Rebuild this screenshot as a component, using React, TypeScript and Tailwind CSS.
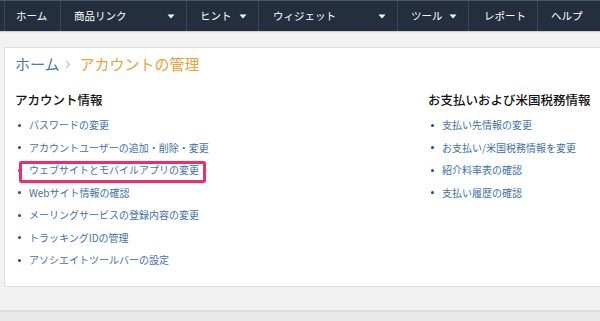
import React from "react";

const Caret = () => (
  <svg width="8" height="5" viewBox="0 0 8 5" className="shrink-0">
    <path d="M0.5 0.5 L7.5 0.5 L4 4.5 Z" fill="#ffffff" />
  </svg>
);

type NavItem = { label: string; w: number; caret?: boolean; pl: number };

const nav: NavItem[] = [
  { label: "ホーム", w: 56, pl: 11 },
  { label: "商品リンク", w: 126, pl: 13, caret: true },
  { label: "ヒント", w: 72, pl: 13, caret: true },
  { label: "ウィジェット", w: 139, pl: 14, caret: true },
  { label: "ツール", w: 71, pl: 13, caret: true },
  { label: "レポート", w: 69, pl: 15 },
  { label: "ヘルプ", w: 63, pl: 13 },
];

const leftItems = [
  "パスワードの変更",
  "アカウントユーザーの追加・削除・変更",
  "ウェブサイトとモバイルアプリの変更",
  "Webサイト情報の確認",
  "メーリングサービスの登録内容の変更",
  "トラッキングIDの管理",
  "アソシエイトツールバーの設定",
];

const rightItems = [
  "支払い先情報の変更",
  "お支払い/米国税務情報を変更",
  "紹介料率表の確認",
  "支払い履歴の確認",
];

const Item = ({ text, highlight }: { text: string; highlight?: boolean }) => (
  <li className="relative flex items-center leading-[22.5px] h-[22.5px]">
    <span className="ml-[3px] mr-[8px] w-[3px] h-[3px] rounded-full bg-[#1d4f91] shrink-0" />
    <span className="relative z-10 text-[10px] text-[#4172a8] whitespace-nowrap">{text}</span>
    {highlight && (
      <span className="absolute left-[4px] top-[2px] w-[187px] h-[22px] border-[3px] border-[#e8306c] rounded-[3px] bg-white shadow-[0_0_1px_rgba(232,48,108,0.6)]" />
    )}
  </li>
);

export default function App() {
  return (
    <div
      className="w-[600px] h-[321px] overflow-hidden bg-[#f2f2f2] flex flex-col"
      style={{ fontFamily: '"Noto Sans CJK JP", "Noto Sans", "Liberation Sans", sans-serif' }}
    >
      <div className="h-[31px] shrink-0 bg-[#232f3e] border-t border-[#4b5563] flex items-stretch pl-[4px] shadow-[0_1px_1px_rgba(0,0,0,0.15)]">
        {nav.map((n, i) => (
          <div
            key={i}
            className="flex items-center justify-between border-l border-[#3b4656] pr-[11px] text-[10.5px] text-white shrink-0"
            style={{ width: n.w, paddingLeft: n.pl }}
          >
            <span className="whitespace-nowrap">{n.label}</span>
            {n.caret && <Caret />}
          </div>
        ))}
      </div>

      <div className="pt-[16px] pl-[4px] overflow-hidden">
        <div className="bg-white border border-[#dedede] mr-[-10px] h-[240px] pt-[5px] pl-[10px]">
          <div className="flex items-center h-[22px]">
            <span className="text-[15px] text-[#3f7bb0]">ホーム</span>
            <svg width="6" height="9" viewBox="0 0 6 9" className="ml-[5px] mr-[9px]">
              <path d="M1 1 L4.5 4.5 L1 8" fill="none" stroke="#c4c4c4" strokeWidth="1.2" />
            </svg>
            <span className="text-[15px] text-[#e8a23e]">アカウントの管理</span>
          </div>

          <div className="flex mt-[16px]">
            <div className="w-[413px] shrink-0">
              <h2 className="text-[12.5px] leading-[18px] font-medium text-[#111111]">アカウント情報</h2>
              <ul className="mt-[5px]">
                {leftItems.map((t, i) => (
                  <Item key={i} text={t} highlight={i === 2} />
                ))}
              </ul>
            </div>
            <div>
              <h2 className="text-[12.5px] leading-[18px] font-medium text-[#111111] whitespace-nowrap">お支払いおよび米国税務情報</h2>
              <ul className="mt-[5px]">
                {rightItems.map((t, i) => (
                  <Item key={i} text={t} />
                ))}
              </ul>
            </div>
          </div>
        </div>
      </div>

      <div className="mt-[23px] flex-1 bg-[#e8e8e8] border-t-2 border-[#dddddd]" />
    </div>
  );
}
